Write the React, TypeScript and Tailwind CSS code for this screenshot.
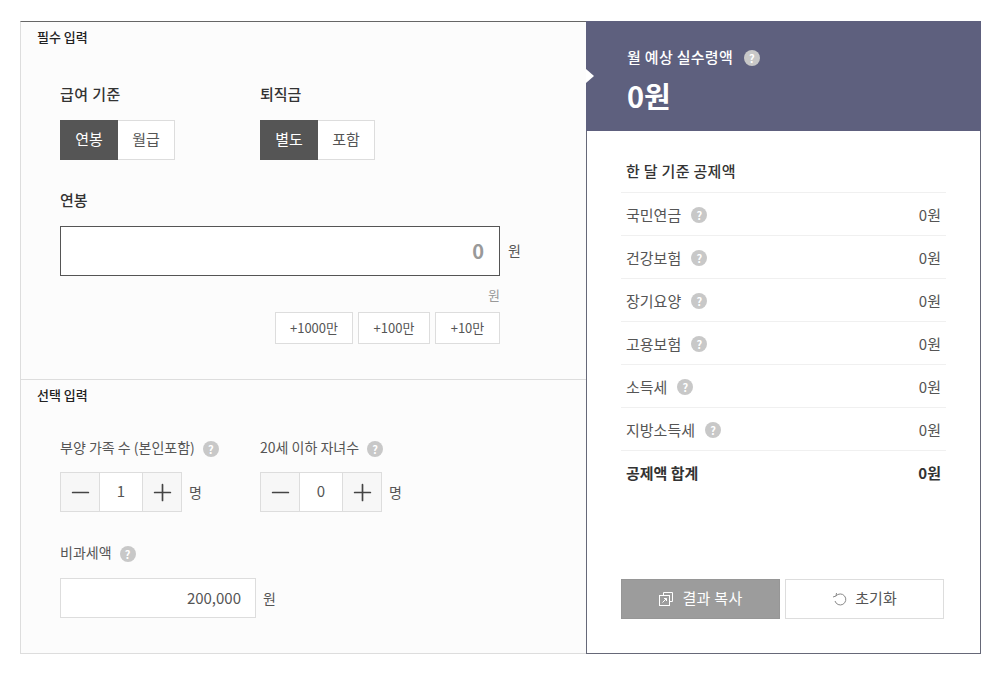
import { Minus, Plus } from "lucide-react";

const ROWS = [
  { name: "국민연금", value: "0원" },
  { name: "건강보험", value: "0원" },
  { name: "장기요양", value: "0원" },
  { name: "고용보험", value: "0원" },
  { name: "소득세", value: "0원" },
  { name: "지방소득세", value: "0원" },
];

function Help({ className = "" }: { className?: string }) {
  return (
    <span
      className={`inline-flex h-4 w-4 shrink-0 items-center justify-center rounded-full bg-[#c8c8c8] text-[11px] font-bold leading-none text-white ${className}`}
    >
      ?
    </span>
  );
}

function Toggle({ on, off }: { on: string; off: string }) {
  return (
    <div className="flex h-10">
      <div className="flex h-10 w-[58px] items-center justify-center bg-[#555555] pb-px text-[15px] text-white">{on}</div>
      <div className="flex h-10 w-[57px] items-center justify-center border border-l-0 border-[#dddddd] bg-white pb-px text-[15px] text-[#555555]">
        {off}
      </div>
    </div>
  );
}

function Stepper({ value }: { value: string }) {
  return (
    <div className="flex items-center">
      <div className="flex h-10 w-[122px] border border-[#dddddd] bg-white">
        <div className="flex w-[38px] items-center justify-center bg-[#f7f7f7] text-[#444444]">
          <Minus size={27} strokeWidth={1.5} />
        </div>
        <div className="flex w-11 items-center justify-center border-x border-[#dddddd] pb-px text-[15px] text-[#555555]">{value}</div>
        <div className="flex flex-1 items-center justify-center bg-[#f7f7f7] text-[#444444]">
          <Plus size={27} strokeWidth={1.5} />
        </div>
      </div>
      <span className="ml-[7px] text-[14px] text-[#555555]">명</span>
    </div>
  );
}

function AddButton({ label, width }: { label: string; width: string }) {
  return (
    <div className={`flex h-8 items-center justify-center border border-[#dddddd] bg-white pb-px text-[13px] text-[#555555] ${width}`}>
      {label}
    </div>
  );
}

export default function App() {
  return (
    <div className="min-h-[677px] bg-white pl-5 pt-[21px] font-['Noto_Sans_CJK_KR','Noto_Sans',sans-serif]">
      <div className="flex h-[633px] w-[961px]">
        {/* 입력 영역 */}
        <div className="flex w-[566px] flex-col border-b border-l border-t border-b-[#dddddd] border-l-[#dddddd] border-t-[#666666] bg-[#fcfcfc]">
          <section className="h-[358px] border-b border-[#dddddd] pl-4 pt-[6px]">
            <h3 className="text-[13px] font-medium leading-[18px] text-[#222222]">필수 입력</h3>
            <div className="ml-[23px] mt-[38px] flex">
              <div className="w-[200px]">
                <div className="text-[15px] font-medium leading-5 tracking-[0.4px] text-[#333333]">급여 기준</div>
                <div className="mt-4">
                  <Toggle on="연봉" off="월급" />
                </div>
              </div>
              <div>
                <div className="text-[15px] font-medium leading-5 text-[#333333]">퇴직금</div>
                <div className="mt-4">
                  <Toggle on="별도" off="포함" />
                </div>
              </div>
            </div>
            <div className="ml-[23px] mt-[30px] text-[15px] font-medium leading-5 text-[#333333]">연봉</div>
            <div className="ml-[23px] mt-4 flex items-center">
              <div className="flex h-[50px] w-[440px] items-center justify-end border border-[#555555] bg-white pr-[15px] text-[20px] font-bold text-[#999999]">
                0
              </div>
              <span className="ml-2 pb-px text-[14px] text-[#555555]">원</span>
            </div>
            <div className="ml-[23px] mt-2.5 w-[440px] text-right text-[13px] leading-[18px] text-[#999999]">원</div>
            <div className="ml-[23px] mt-2 flex w-[440px] justify-end gap-[5px]">
              <AddButton label="+1000만" width="w-[78px]" />
              <AddButton label="+100만" width="w-[72px]" />
              <AddButton label="+10만" width="w-[65px]" />
            </div>
          </section>

          <section className="flex-1 pl-4 pt-[6px]">
            <h3 className="text-[13px] font-medium leading-[18px] text-[#222222]">선택 입력</h3>
            <div className="ml-[23px] mt-[34px] flex">
              <div className="w-[200px]">
                <div className="flex h-[18px] items-center gap-2 text-[14px] text-[#555555]">
                  부양 가족 수 (본인포함) <Help className="mt-1" />
                </div>
                <div className="mt-4">
                  <Stepper value="1" />
                </div>
              </div>
              <div>
                <div className="flex h-[18px] items-center gap-2 text-[14px] text-[#555555]">
                  20세 이하 자녀수 <Help className="mt-1" />
                </div>
                <div className="mt-4">
                  <Stepper value="0" />
                </div>
              </div>
            </div>
            <div className="ml-[23px] mt-[31px] flex h-[18px] items-center gap-2 text-[14px] text-[#555555]">
              비과세액 <Help className="mt-1" />
            </div>
            <div className="ml-[23px] mt-[17px] flex items-center">
              <div className="flex h-10 w-[196px] items-center justify-end border border-[#dddddd] bg-white pr-[14px] text-[15px] text-[#555555]">
                200,000
              </div>
              <span className="ml-[7px] text-[14px] text-[#555555]">원</span>
            </div>
          </section>
        </div>

        {/* 결과 영역 */}
        <div className="flex w-[395px] flex-col border border-t-0 border-[#666878] bg-white">
          <div className="relative -mx-px h-[110px] bg-[#5e607e] pl-[41px] pt-[26px] text-white">
            <span className="absolute left-0 top-[48px] h-0 w-0 border-y-[7px] border-l-[8px] border-y-transparent border-l-white" />
            <div className="flex h-5 items-center gap-[11px] text-[15px] font-medium tracking-[0.3px]">
              월 예상 실수령액 <Help className="mt-0.5" />
            </div>
            <div className="mt-2 text-[29px] font-bold leading-10">0원</div>
          </div>

          <div className="px-[34px] pt-[30px]">
            <div className="border-b border-[#f0f0f0] pb-[11px] pl-[5px] text-[15px] font-medium leading-5 tracking-[0.3px] text-[#333333]">
              한 달 기준 공제액
            </div>
            {ROWS.map((row) => (
              <div
                key={row.name}
                className="flex h-[43px] items-center justify-between border-b border-[#f0f0f0] px-[5px] pt-[2px] text-[15px] text-[#555555]"
              >
                <span className="flex items-center gap-[10px]">
                  {row.name} <Help />
                </span>
                <span>{row.value}</span>
              </div>
            ))}
            <div className="flex h-[43px] items-center justify-between px-[5px] pt-px text-[15px] font-bold text-[#333333]">
              <span>공제액 합계</span>
              <span>0원</span>
            </div>
          </div>

          <div className="mt-[85px] flex gap-[5px] pl-[34px]">
            <div className="flex h-10 w-[159px] items-center justify-center gap-2 border border-[#969696] bg-[#9c9c9c] pb-px text-[15px] tracking-[0.3px] text-white">
              <svg width="16" height="16" viewBox="0 0 16 16" fill="none" stroke="currentColor" strokeWidth="1">
                <path d="M5.5 4V1.5H14.5V10.5H12" />
                <rect x="1.5" y="4.5" width="10" height="10" />
                <path d="M4.5 11.5L8.5 7.5M6 7.5H8.5V10" />
              </svg>
              결과 복사
            </div>
            <div className="flex h-10 w-[159px] items-center justify-center gap-[7px] border border-[#dddddd] bg-white pb-px text-[15px] text-[#555555]">
              <svg width="16" height="16" viewBox="0 0 16 16" fill="none" stroke="#888888" strokeWidth="1">
                <path d="M4 5A5.5 5.5 0 1 1 3 10" />
                <path d="M1 6L4 5L4.5 2" />
              </svg>
              초기화
            </div>
          </div>
        </div>
      </div>
    </div>
  );
}
